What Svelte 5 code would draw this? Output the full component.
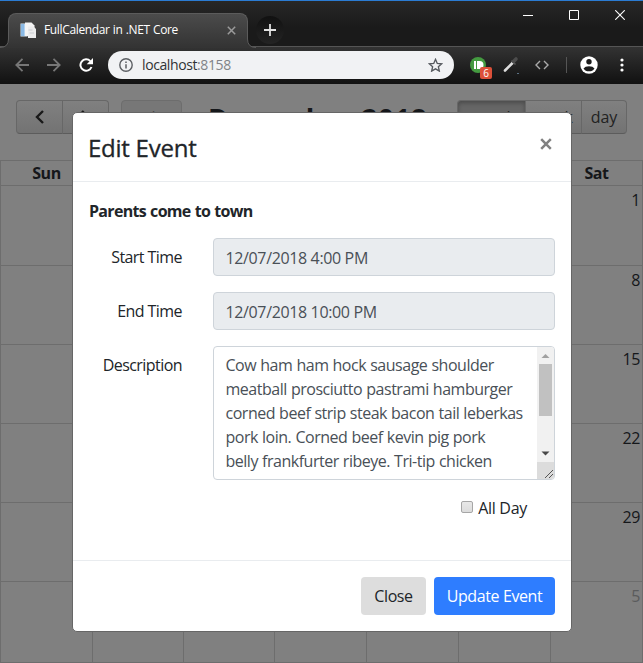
<script>
  const weeks = [
    { day: '1', height: 80 },
    { day: '8', height: 79 },
    { day: '15', height: 79 },
    { day: '22', height: 79 },
    { day: '29', height: 79 },
    { day: '5', height: 81, other: true }
  ];
  const days = ['Sun', 'Mon', 'Tue', 'Wed', 'Thu', 'Fri', 'Sat'];
  const description = [
    'Cow ham ham hock sausage shoulder',
    'meatball prosciutto pastrami hamburger',
    'corned beef strip steak bacon tail leberkas',
    'pork loin. Corned beef kevin pig pork',
    'belly frankfurter ribeye. Tri-tip chicken'
  ];
</script>

<div class="window">
  <header class="chrome">
    <div class="tabs">
      <div class="tab">
        <svg class="flare left" width="9" height="9" viewBox="0 0 9 9"><path d="M9 0v9H0Q8 8 8.500 0z" fill="#343434" /><path d="M0 8.500Q8.500 8.500 8.500 0" fill="none" stroke="#5b5b5b" /></svg>
        <svg class="favicon" width="17" height="17" viewBox="0 0 17 17">
          <path d="M.5 1.500h7v13h-7z" fill="#dceaf7" /><path d="M1 2h3.500v12H1z" fill="#8ab9e4" />
          <path d="M5 .5h6.500l3 3V14H5z" fill="#f4f4f4" /><path d="M8 4.500h5.500l2.500 2.500V16H8z" fill="#ececed" />
          <path d="M8.500 8h4M9.500 11h4.500" stroke="#c9ccd0" />
        </svg>
        <span class="tab-title">FullCalendar in .NET Core</span>
        <svg class="tab-close" width="9" height="9" viewBox="0 0 9 9"><path d="M.8.8l7.400 7.400M8.200.8L.8 8.200" stroke="#9b9b9b" stroke-width="1.500" /></svg>
        <svg class="flare right" width="9" height="9" viewBox="0 0 9 9"><path d="M0 0v9h9Q1 8 .5 0z" fill="#343434" /><path d="M9 8.500Q.5 8.500 .5 0" fill="none" stroke="#5b5b5b" /></svg>
      </div>
      <div class="new-tab">
        <svg width="12" height="12" viewBox="0 0 12 12"><path d="M6 0v12M0 6h12" stroke="#e2e2e2" stroke-width="1.800" /></svg>
      </div>
      <div class="controls">
        <svg width="10" height="10" viewBox="0 0 10 10"><path d="M0 5.500h10" stroke="#fff" /></svg>
        <svg width="10" height="10" viewBox="0 0 10 10"><path d="M.5.5h9v9h-9z" fill="none" stroke="#fff" /></svg>
        <svg width="10" height="10" viewBox="0 0 10 10"><path d="M.2.2l9.600 9.600M9.800.2L.2 9.800" stroke="#fff" stroke-width="1.100" /></svg>
      </div>
    </div>
    <div class="toolbar">
      <svg class="nav" width="14" height="14" viewBox="0 0 14 14"><path d="M14 7H1.500M7.500.8L1.300 7l6.200 6.200" fill="none" stroke="#777" stroke-width="1.800" /></svg>
      <svg class="nav forward" width="14" height="14" viewBox="0 0 14 14"><path d="M0 7h12.500M6.500.8L12.700 7l-6.200 6.200" fill="none" stroke="#777" stroke-width="1.800" /></svg>
      <svg class="reload" width="14" height="14" viewBox="0 0 14 14"><path d="M11.300 3.100A5.700 5.700 0 1 0 12.500 9" fill="none" stroke="#fff" stroke-width="2" /><path d="M14 0v6.300H7.700z" fill="#fff" /></svg>
      <div class="address">
        <svg width="14" height="14" viewBox="0 0 14 14"><circle cx="7" cy="7" r="6.200" fill="none" stroke="#5c5f63" stroke-width="1.400" /><path d="M7 6.200v4.200M7 3.400v1.500" stroke="#5c5f63" stroke-width="1.500" /></svg>
        <span class="url">localhost<i>:8158</i></span>
        <svg class="star" width="15" height="14" viewBox="0 0 24 23"><path d="M12 2.200l2.900 6.700 7.300.7-5.500 4.800 1.600 7.100L12 17.800l-6.300 3.700 1.600-7.100L1.800 9.600l7.300-.7z" fill="none" stroke="#55595e" stroke-width="2.200" /></svg>
      </div>
      <div class="extension">
        <svg width="16" height="16" viewBox="0 0 16 16"><circle cx="8" cy="8" r="8" fill="#449a40" /><path d="M4 4h2v8H4zM7 4h2.500a4 4 0 0 1 0 8H7z" fill="#fff" /></svg>
        <b class="badge">6</b>
      </div>
      <svg class="picker" width="17" height="18" viewBox="0 0 17 18"><path d="M2 14.500l8-8" stroke="#ddd" stroke-width="2.600" stroke-linecap="round" /><path d="M8.500 4.500l4 4" stroke="#555" stroke-width="1.600" /><path d="M10.500 5.500l2.500-2.500" stroke="#4c4c4c" stroke-width="3.600" stroke-linecap="round" /><path d="M14 18h2" stroke="#9ac8ec" /></svg>
      <svg class="code" width="14" height="10" viewBox="0 0 14 10"><path d="M5 1L1 5l4 4M9 1l4 4-4 4" fill="none" stroke="#aaa" stroke-width="1.400" /></svg>
      <span class="divider"></span>
      <svg class="avatar" width="18" height="18" viewBox="0 0 18 18"><circle cx="9" cy="9" r="8.700" fill="#fff" /><circle cx="9" cy="5.700" r="2.700" fill="#1c1c1c" /><path d="M3.500 12.400Q5 10.200 9 10.200t5.500 2.200Q12.700 15.300 9 15.300t-5.500-2.900z" fill="#1c1c1c" /></svg>
      <svg class="menu" width="4" height="14" viewBox="0 0 4 14"><circle cx="2" cy="2" r="1.600" fill="#fff" /><circle cx="2" cy="7" r="1.600" fill="#fff" /><circle cx="2" cy="12" r="1.600" fill="#fff" /></svg>
    </div>
  </header>

  <main>
    <div class="cal-bar">
      <div class="group">
        <button class="prev"><svg width="9" height="14" viewBox="0 0 9 14"><path d="M8 1L2 7l6 6" fill="none" stroke="#191919" stroke-width="2.400" /></svg></button>
        <button class="next"><svg width="9" height="14" viewBox="0 0 9 14"><path d="M1 1l6 6-6 6" fill="none" stroke="#191919" stroke-width="2.400" /></svg></button>
      </div>
      <button class="today">today</button>
      <h2>December 2018</h2>
      <div class="group views">
        <button class="month">month</button><button class="week">week</button><button class="day">day</button>
      </div>
    </div>
    <div class="grid">
      <div class="row head">
        {#each days as day}<div class="cell">{day}</div>{/each}
      </div>
      {#each weeks as week}
        <div class="row" style="height: {week.height}px">
          {#each days as day, i}<div class="cell" class:other={week.other}>{i === 6 ? week.day : ''}</div>{/each}
        </div>
      {/each}
    </div>
  </main>

  <section class="modal">
    <div class="modal-head">
      <h5>Edit Event</h5>
      <svg width="12" height="12" viewBox="0 0 12 12"><path d="M1.200 1.200l9.600 9.600M10.800 1.200L1.200 10.800" stroke="#808080" stroke-width="2.500" /></svg>
    </div>
    <div class="modal-body">
      <p class="event-name">Parents come to town</p>
      <div class="field"><span class="label">Start Time</span><div class="input">12/07/2018 4:00 PM</div></div>
      <div class="field"><span class="label">End Time</span><div class="input">12/07/2018 10:00 PM</div></div>
      <div class="field">
        <span class="label">Description</span>
        <div class="textarea">
          <div class="lines">{#each description as line}<div>{line}</div>{/each}</div>
          <div class="scrollbar">
            <svg width="17" height="17" viewBox="0 0 17 17"><path d="M4.500 11h8L8.500 7z" fill="#a0a0a0" /></svg>
            <div class="thumb"></div>
            <svg class="down" width="17" height="17" viewBox="0 0 17 17"><path d="M4.500 6.500h8l-4 4z" fill="#484848" /></svg>
            <svg class="grip" width="17" height="17" viewBox="0 0 17 17"><path d="M8 16L16 8M12 16l4-4" stroke="#555" /></svg>
          </div>
        </div>
      </div>
      <div class="check"><i></i><span>All Day</span></div>
    </div>
    <div class="modal-foot">
      <button class="close">Close</button>
      <button class="update">Update Event</button>
    </div>
  </section>
</div>

<style>
  :global(body) { margin: 0; }
  * { box-sizing: border-box; }
  svg { display: block; flex: none; }
  button { font: inherit; margin: 0; padding: 0; border: 0; white-space: nowrap; }
  .window { position: relative; width: 643px; height: 663px; overflow: hidden; background: #808080; font: 16px/24px "Open Sans", "Noto Sans", sans-serif; letter-spacing: -0.4px; color: #212529; }

  .chrome { height: 84px; background: #1a1a1a; border-top: 1px solid #2b7cd3; }
  .tabs { display: flex; height: 46px; border-bottom: 1px solid #555; background: linear-gradient(#272727, #1a1a1a 60%); }
  .tab { position: relative; display: flex; align-items: center; width: 240px; height: 34px; margin: 12px 0 0 8px; padding: 0 11px 1px; border: 1px solid #5b5b5b; border-bottom: 0; border-radius: 8px 8px 0 0; background: linear-gradient(#4b4b4b, #343434); }
  .tab::after { content: ""; position: absolute; left: -1px; right: -1px; bottom: -1px; height: 2px; background: #343434; }
  .flare { position: absolute; bottom: -1px; z-index: 1; }
  .left { left: -9px; }
  .right { right: -9px; }
  .tab-title { margin-left: 7px; font-size: 12px; letter-spacing: -0.35px; word-spacing: 0.4px; color: #fff; white-space: nowrap; }
  .tab-close { margin-left: auto; }
  .new-tab { display: flex; align-items: center; justify-content: center; width: 28px; height: 28px; margin: 15px 0 0 8px; border-radius: 50%; background: linear-gradient(#111, #242424); }
  .controls { display: flex; gap: 36px; margin: 9px 18px 0 auto; }
  .toolbar { display: flex; align-items: center; height: 37px; padding: 0 0 1px 15px; background: linear-gradient(#333, #111); }
  .forward { margin-left: 18px; }
  .reload { margin-left: 18px; }
  .address { display: flex; align-items: center; width: 346px; height: 28px; margin-left: 15px; padding: 0 11px; border-radius: 14px; background: #f1f2f4; }
  .url { margin-left: 9px; font-size: 14px; letter-spacing: -0.4px; color: #303235; }
  .url i { font-style: normal; color: #808387; }
  .star { margin-left: auto; }
  .extension { position: relative; margin-left: 16px; }
  .badge { position: absolute; left: 10px; top: 10px; width: 12px; height: 12px; border-radius: 2px; background: #dc5039; color: #fff; font: 10px/12px "Open Sans", sans-serif; text-align: center; }
  .picker { margin-left: 17px; }
  .code { margin-left: 15px; }
  .divider { width: 1px; height: 16px; margin-left: 17px; background: #555; }
  .avatar { margin-left: 13px; }
  .menu { margin-left: 22px; }

  main { height: 579px; padding-top: 16px; color: #15171a; }
  .cal-bar { display: flex; height: 34px; padding: 0 16px; }
  .cal-bar button { display: flex; align-items: center; justify-content: center; height: 34px; border: 1px solid #676767; border-bottom-color: #5c5c5c; background: linear-gradient(#808080, #737373); color: #222; }
  .group { display: flex; }
  .cal-bar .prev { width: 47px; border-radius: 4px 0 0 4px; }
  .cal-bar .next { width: 47px; margin-left: -1px; border-radius: 0 4px 4px 0; }
  .cal-bar .today { width: 61px; margin-left: 12px; border-radius: 4px; background: #777; border-color: #6d6d6d; color: #4a4a4a; }
  h2 { margin: 2px 0 0 26px; font-size: 28px; line-height: 34px; letter-spacing: 1px; font-weight: 700; letter-spacing: 0.4px; white-space: nowrap; }
  .views { margin-left: auto; }
  .cal-bar .month { width: 69px; border-radius: 4px 0 0 4px; background: #666; box-shadow: inset 0 2px 4px #4a4a4a; }
  .cal-bar .week { width: 57px; margin-left: -1px; }
  .cal-bar .day { width: 46px; margin-left: -1px; border-radius: 0 4px 4px 0; }
  .grid { margin-top: 26px; border-left: 1px solid #6d6d6d; }
  .row { display: grid; grid-template-columns: 92px 91px 91px 92px 92px 92px 92px; border-bottom: 1px solid #6d6d6d; }
  .cell { border-right: 1px solid #6d6d6d; padding: 2px 2px 0 0; text-align: right; }
  .head { height: 26px; border-top: 1px solid #6d6d6d; font-weight: 700; }
  .head .cell { padding: 0; text-align: center; }
  .other { color: #5a5b5c; }

  .modal { position: absolute; left: 72px; top: 112px; width: 500px; height: 520px; border: 1px solid #666; border-radius: 5px; background: #fff; }
  .modal-head { display: flex; justify-content: space-between; height: 69px; padding: 25px 19px 0 15px; border-bottom: 1px solid #e9ecef; }
  h5 { margin: -8px 0 0; font-size: 24px; line-height: 36px; font-weight: 400; letter-spacing: -0.25px; -webkit-text-stroke: 0.3px #212529; }
  .modal-body { height: 379px; padding: 17px 16px 0; border-bottom: 1px solid #e9ecef; }
  .event-name { margin: 0 0 15px; font-weight: 700; letter-spacing: -0.7px; word-spacing: 0.7px; }
  .field { display: flex; margin-bottom: 16px; }
  .label { width: 93px; margin-right: 31px; padding-top: 7px; text-align: right; white-space: nowrap; letter-spacing: -0.56px; }
  .input { width: 342px; height: 38px; padding: 7px 11.500px; border: 1px solid #ced4da; border-radius: 4px; background: #e9ecef; color: #495057; letter-spacing: -0.36px; }
  .textarea { display: flex; justify-content: space-between; width: 342px; height: 134px; border: 1px solid #ced4da; border-radius: 4px; overflow: hidden; color: #495057; }
  .lines { padding: 6px 0 0 11.500px; white-space: nowrap; letter-spacing: -0.48px; word-spacing: 0.4px; }
  .scrollbar { width: 17px; background: #f1f1f1; }
  .thumb { width: 13px; height: 52px; margin: 0 auto; background: #c1c1c1; }
  .down { margin-top: 29px; }
  .grip { background: #dcdcdc; }
  .check { display: flex; align-items: center; justify-content: flex-end; padding-right: 28px; letter-spacing: -0.3px; }
  .check i { width: 12px; height: 12px; margin: -3px 5px 0 0; border: 1px solid #a6a6a6; border-radius: 2px; background: linear-gradient(#e8e8e8, #dcdcdc); }
  .modal-foot { display: flex; justify-content: flex-end; gap: 8px; padding: 16px; }
  .modal-foot button { height: 38px; border-radius: 4px; letter-spacing: -0.4px; }
  .close { width: 65px; background: #ddd; color: #212529; }
  .update { width: 121px; background: #2e7dff; color: #fff; }
</style>
